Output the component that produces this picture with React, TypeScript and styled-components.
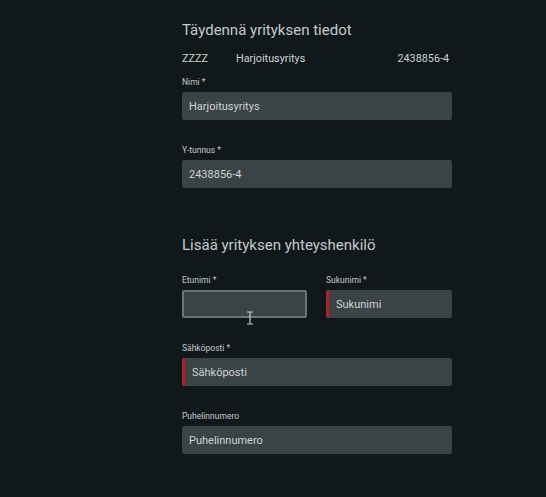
import React from "react";
import styled, { createGlobalStyle } from "styled-components";

const Global = createGlobalStyle`
  html, body { margin: 0; padding: 0; background: #11181a; }
  body { font-family: Roboto, "Liberation Sans", sans-serif; }
`;

const Page = styled.div`
  width: 546px;
  height: 497px;
  background: #11181a;
  display: flex;
  justify-content: flex-start;
  overflow: hidden;
`;

const Form = styled.div`
  margin-left: 182px;
  width: 270px;
  padding-top: 20px;
  display: flex;
  flex-direction: column;
`;

const Title = styled.h2<{ $top?: number }>`
  margin: ${(p) => p.$top ?? 0}px 0 0 0;
  font-size: 15px;
  font-weight: 400;
  color: #c5cacb;
  line-height: 20px;
`;

const InfoRow = styled.div`
  display: flex;
  margin-top: 12px;
  font-size: 10.8px;
  color: #cfd3d3;
  line-height: 14px;
`;

const InfoCode = styled.span`
  width: 54px;
`;

const InfoName = styled.span`
  flex: 1;
`;

const InfoId = styled.span`
  margin-right: 3px;
`;

const Field = styled.div<{ $top: number }>`
  display: flex;
  flex-direction: column;
  margin-top: ${(p) => p.$top}px;
  position: relative;
`;

const Label = styled.label`
  font-size: 8.5px;
  color: #c4c9ca;
  line-height: 11px;
  margin-bottom: 4px;
`;

const Input = styled.div<{ $state?: "error" | "focus" }>`
  height: 28px;
  box-sizing: border-box;
  background: #3a4345;
  border-radius: 2px;
  display: flex;
  align-items: center;
  padding-left: 7px;
  font-size: 11px;
  color: #cfd4d4;
  border: ${(p) => (p.$state === "focus" ? "2px solid #6b7577" : "none")};
  border-left: ${(p) =>
    p.$state === "error"
      ? "3px solid #b0232c"
      : p.$state === "focus"
      ? "2px solid #6b7577"
      : "none"};
`;

const Row = styled.div`
  display: flex;
  gap: 19px;
  margin-top: 20px;
`;

const Half = styled(Field)`
  width: 125px;
  &:last-child {
    width: 126px;
  }
`;

const Cursor = styled.svg`
  position: absolute;
  left: 64px;
  top: 36px;
`;

export default function App() {
  return (
    <Page>
      <Global />
      <Form>
        <Title>Täydennä yrityksen tiedot</Title>
        <InfoRow>
          <InfoCode>ZZZZ</InfoCode>
          <InfoName>Harjoitusyritys</InfoName>
          <InfoId>2438856-4</InfoId>
        </InfoRow>
        <Field $top={11}>
          <Label>Nimi *</Label>
          <Input>Harjoitusyritys</Input>
        </Field>
        <Field $top={25}>
          <Label>Y-tunnus *</Label>
          <Input>2438856-4</Input>
        </Field>
        <Title $top={47}>Lisää yrityksen yhteyshenkilö</Title>
        <Row>
          <Half $top={0}>
            <Label>Etunimi *</Label>
            <Input $state="focus" />
            <Cursor width="8" height="14" viewBox="0 0 8 14">
              <path
                d="M1 1h6M4 1v12M1 13h6"
                stroke="#c8cccc"
                strokeWidth="1.2"
                fill="none"
              />
            </Cursor>
          </Half>
          <Half $top={0}>
            <Label>Sukunimi *</Label>
            <Input $state="error">Sukunimi</Input>
          </Half>
        </Row>
        <Field $top={25}>
          <Label>Sähköposti *</Label>
          <Input $state="error">Sähköposti</Input>
        </Field>
        <Field $top={25}>
          <Label>Puhelinnumero</Label>
          <Input>Puhelinnumero</Input>
        </Field>
      </Form>
    </Page>
  );
}
